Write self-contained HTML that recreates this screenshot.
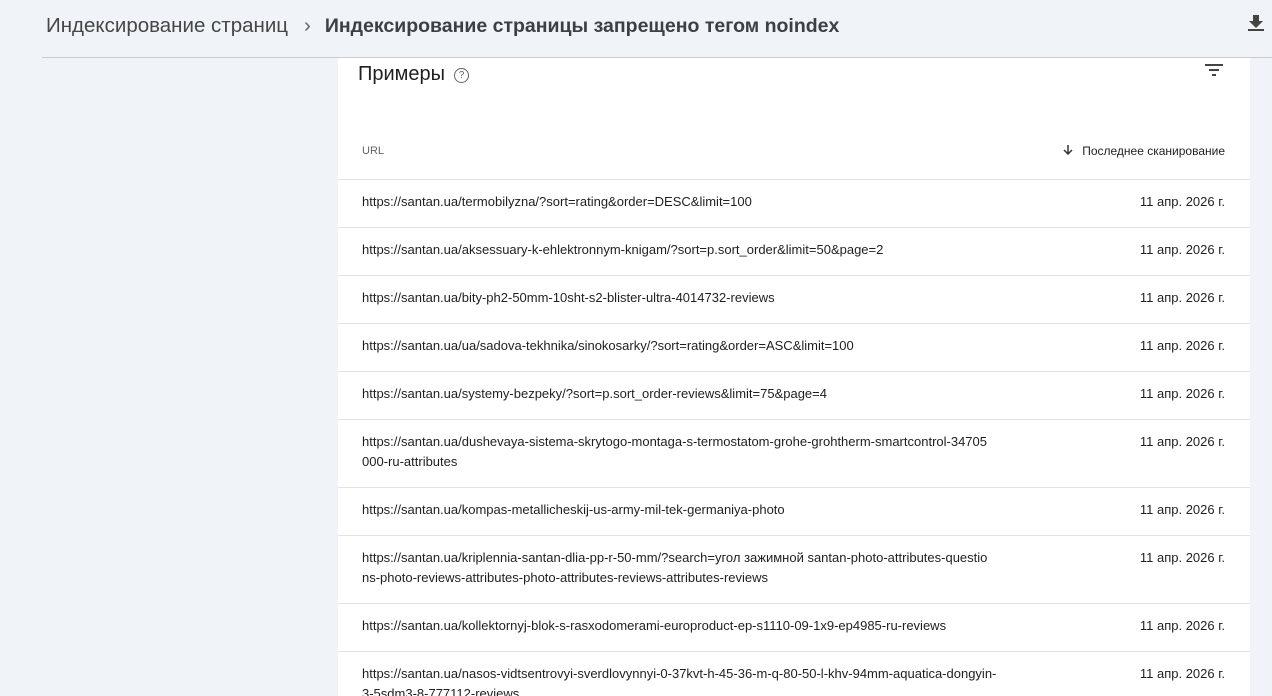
<!DOCTYPE html>
<html><head><meta charset="utf-8"><style>
*{margin:0;padding:0;box-sizing:border-box}
html,body{width:1272px;height:696px;overflow:hidden}
body{background:#f0f3f8;font-family:"Liberation Sans",Arial,sans-serif;color:#1f1f1f;position:relative}
.bc{position:absolute;top:14px;left:46px;font-size:20.5px;color:#444746;white-space:nowrap}
.bc b{font-size:19.5px;color:#3c4043}
.bc .sep{margin:0 14px 0 16px;color:#5f6368}
.line{position:absolute;top:57px;left:42px;right:0;height:1px;background:#c8cacd}
.dl{position:absolute;top:14px;left:1247px}
.card{position:absolute;top:58px;left:338px;width:912px;height:640px;background:#fff;overflow:hidden}
.title{position:absolute;top:5px;left:20px;font-size:20px;color:#1f1f1f}
.q{display:inline-block;width:15px;height:15px;border:1.3px solid #5f6368;border-radius:50%;font-size:10px;text-align:center;line-height:13px;color:#5f6368;vertical-align:2px;margin-left:9px}
.filt{position:absolute;top:4px;left:866px}
.th{position:absolute;top:121px;left:0;right:0;height:1px;background:#e3e3e3}
.hu{position:absolute;top:87px;left:24px;font-size:11px;color:#5f6368}
.hd{position:absolute;top:86px;right:25px;font-size:12px;color:#1f1f1f}
.rows{position:absolute;top:122px;left:0;right:0}
.r{border-bottom:1px solid #e3e3e3;height:48px;position:relative;font-size:13px}
.r.t{height:68px}
.u{position:absolute;left:24px;top:12px;width:636px;line-height:20px;word-break:break-all}
.d{position:absolute;right:25px;top:12px;line-height:20px}
</style></head><body>
<div class="bc">Индексирование страниц<span class="sep">›</span><b>Индексирование страницы запрещено тегом noindex</b></div>
<svg class="dl" width="18" height="18" viewBox="0 0 18 18"><path d="M6 1h6v6h4l-7 7-7-7h4z" fill="#444"/><rect x="1" y="15" width="16" height="2" fill="#444"/></svg>
<div class="line"></div>
<div class="card">
<div class="title">Примеры<span class="q">?</span></div>
<svg class="filt" width="20" height="16" viewBox="0 0 20 16"><rect x="1" y="2" width="18" height="2" fill="#444"/><rect x="5" y="7" width="10" height="2" fill="#444"/><rect x="8" y="12" width="4" height="2" fill="#444"/></svg>
<div class="hu">URL</div>
<div class="hd"><svg width="12" height="12" viewBox="0 0 12 12" style="vertical-align:-1px;margin-right:8px"><path d="M6 1v9M2 6l4 4 4-4" stroke="#333" stroke-width="1.5" fill="none"/></svg>Последнее сканирование</div>
<div class="th"></div>
<div class="rows">
<div class="r"><div class="u">https://santan.ua/termobilyzna/?sort=rating&amp;order=DESC&amp;limit=100</div><div class="d">11 апр. 2026 г.</div></div>
<div class="r"><div class="u">https://santan.ua/aksessuary-k-ehlektronnym-knigam/?sort=p.sort_order&amp;limit=50&amp;page=2</div><div class="d">11 апр. 2026 г.</div></div>
<div class="r"><div class="u">https://santan.ua/bity-ph2-50mm-10sht-s2-blister-ultra-4014732-reviews</div><div class="d">11 апр. 2026 г.</div></div>
<div class="r"><div class="u">https://santan.ua/ua/sadova-tekhnika/sinokosarky/?sort=rating&amp;order=ASC&amp;limit=100</div><div class="d">11 апр. 2026 г.</div></div>
<div class="r"><div class="u">https://santan.ua/systemy-bezpeky/?sort=p.sort_order-reviews&amp;limit=75&amp;page=4</div><div class="d">11 апр. 2026 г.</div></div>
<div class="r t"><div class="u">https://santan.ua/dushevaya-sistema-skrytogo-montaga-s-termostatom-grohe-grohtherm-smartcontrol-34705<br>000-ru-attributes</div><div class="d">11 апр. 2026 г.</div></div>
<div class="r"><div class="u">https://santan.ua/kompas-metallicheskij-us-army-mil-tek-germaniya-photo</div><div class="d">11 апр. 2026 г.</div></div>
<div class="r t"><div class="u">https://santan.ua/kriplennia-santan-dlia-pp-r-50-mm/?search=угол зажимной santan-photo-attributes-questio<br>ns-photo-reviews-attributes-photo-attributes-reviews-attributes-reviews</div><div class="d">11 апр. 2026 г.</div></div>
<div class="r"><div class="u">https://santan.ua/kollektornyj-blok-s-rasxodomerami-europroduct-ep-s1110-09-1x9-ep4985-ru-reviews</div><div class="d">11 апр. 2026 г.</div></div>
<div class="r t"><div class="u">https://santan.ua/nasos-vidtsentrovyi-sverdlovynnyi-0-37kvt-h-45-36-m-q-80-50-l-khv-94mm-aquatica-dongyin-<br>3-5sdm3-8-777112-reviews</div><div class="d">11 апр. 2026 г.</div></div>
</div>
</div>
</body></html>
